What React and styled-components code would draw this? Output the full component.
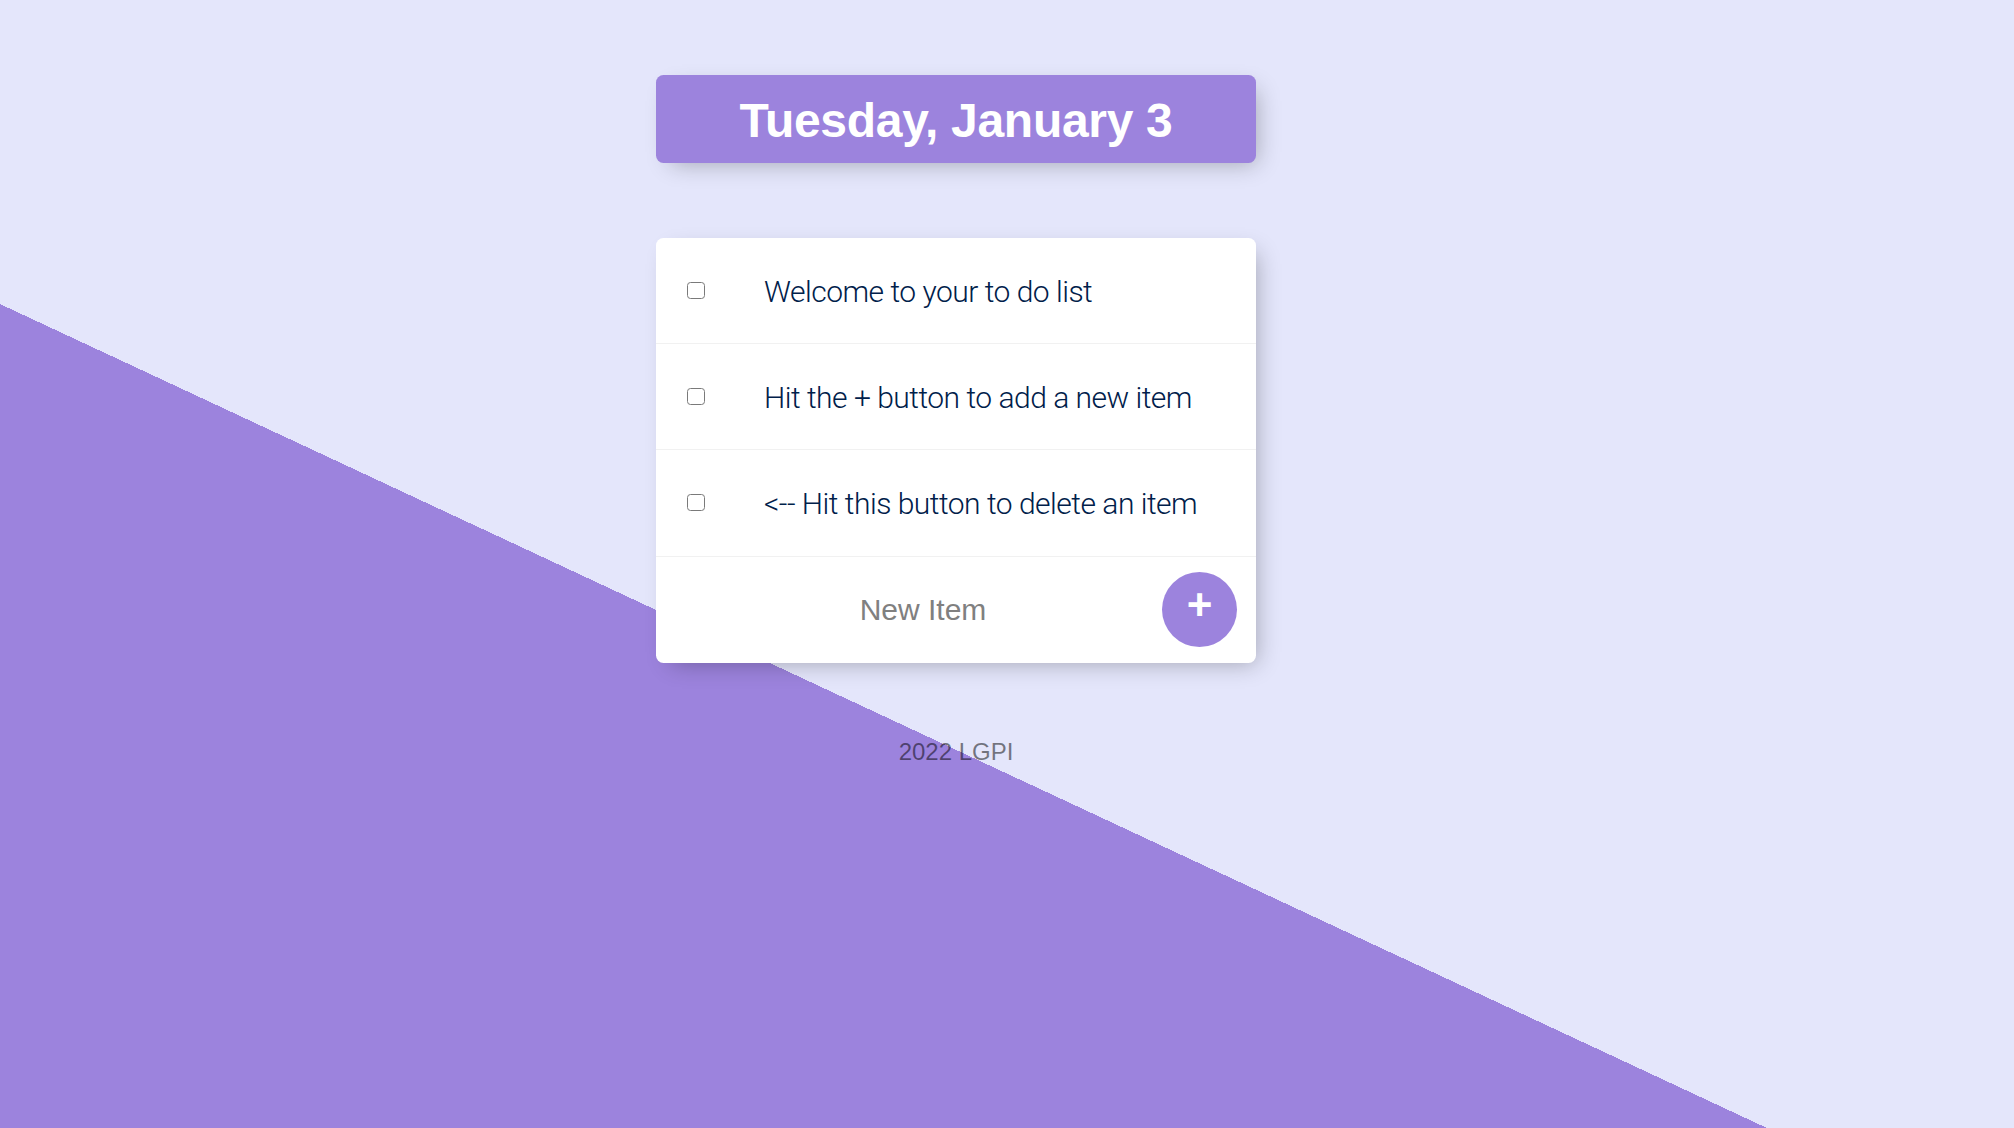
import React from "react";
import styled, { createGlobalStyle } from "styled-components";

const PURPLE = "#9c83dd";
const LIGHT = "#e4e6fb";

const GlobalStyle = createGlobalStyle`
  html, body { margin: 0; padding: 0; }
  body { font-family: "Liberation Sans", Arial, sans-serif; }
  * { box-sizing: border-box; }
`;

const Page = styled.div`
  min-height: 100vh;
  display: flex;
  flex-direction: column;
  align-items: center;
  padding: 75px 102px 0 0;
  background-color: ${LIGHT};
  background-image: linear-gradient(25deg, ${PURPLE} 39.86%, ${LIGHT} 39.86%);
`;

const Box = styled.div`
  width: 600px;
  border-radius: 7.5px;
  box-shadow: 7.5px 7.5px 22.5px -7.5px rgba(0, 0, 0, 0.3);
  background: ${(p) => (p.$heading ? PURPLE : "#ffffff")};
  margin-bottom: 75px;
  overflow: hidden;
`;

const Title = styled.h1`
  margin: 0;
  padding: 17px 0 13px;
  line-height: 58px;
  font-family: "Liberation Sans", Arial, sans-serif;
  font-size: 48px;
  font-weight: 700;
  letter-spacing: -0.3px;
  color: #ffffff;
  text-align: center;
`;

const Row = styled.div`
  height: 106.2px;
  display: flex;
  align-items: center;
  border-bottom: ${(p) => (p.$last ? "0" : "1px solid #f1f1f1")};
`;

const Check = styled.input`
  appearance: none;
  -webkit-appearance: none;
  width: 18px;
  height: 17px;
  margin: 0 30px 0 31px;
  flex: none;
  border: 1.5px solid #7a7a7a;
  border-radius: 3.5px;
  background: #fff;
`;

const ItemText = styled.p`
  margin: 0;
  padding: 2px 30px 0 29px;
  font-family: Roboto, "Liberation Sans", sans-serif;
  font-size: 30px;
  font-weight: 300;
  letter-spacing: -0.5px;
  color: #00204a;
`;

const Form = styled.form`
  display: flex;
  align-items: center;
  gap: 2px;
  padding-left: 30px;
  width: 100%;
`;

const TextInput = styled.input`
  width: 474px;
  height: 90px;
  border: none;
  background: transparent;
  text-align: center;
  font-family: "Liberation Sans", Arial, sans-serif;
  font-size: 30px;
  padding: 0;
  color: #333;
  outline: none;
  &::placeholder { color: #808080; opacity: 1; }
`;

const AddButton = styled.button`
  width: 75px;
  height: 75px;
  flex: none;
  border: 0;
  border-radius: 50%;
  background: ${PURPLE};
  color: #ffffff;
  font-family: "Liberation Sans", Arial, sans-serif;
  font-size: 44px;
  font-weight: 700;
  line-height: 1;
  padding: 0 0 10px;
  display: flex;
  align-items: center;
  justify-content: center;
`;

const Footer = styled.footer`
  font-family: "Liberation Sans", Arial, sans-serif;
  font-size: 24px;
  line-height: 28px;
  color: rgba(0, 0, 0, 0.5);
  text-align: center;
`;

const items = [
  "Welcome to your to do list",
  "Hit the + button to add a new item",
  "<-- Hit this button to delete an item",
];

export default function App() {
  return (
    <>
      <GlobalStyle />
      <Page>
        <Box $heading>
          <Title>Tuesday, January 3</Title>
        </Box>
        <Box>
          {items.map((t) => (
            <Row key={t}>
              <Check type="checkbox" />
              <ItemText>{t}</ItemText>
            </Row>
          ))}
          <Row $last>
            <Form onSubmit={(e) => e.preventDefault()}>
              <TextInput type="text" placeholder="New Item" autoComplete="off" />
              <AddButton type="submit">+</AddButton>
            </Form>
          </Row>
        </Box>
        <Footer>2022 LGPI</Footer>
      </Page>
    </>
  );
}
